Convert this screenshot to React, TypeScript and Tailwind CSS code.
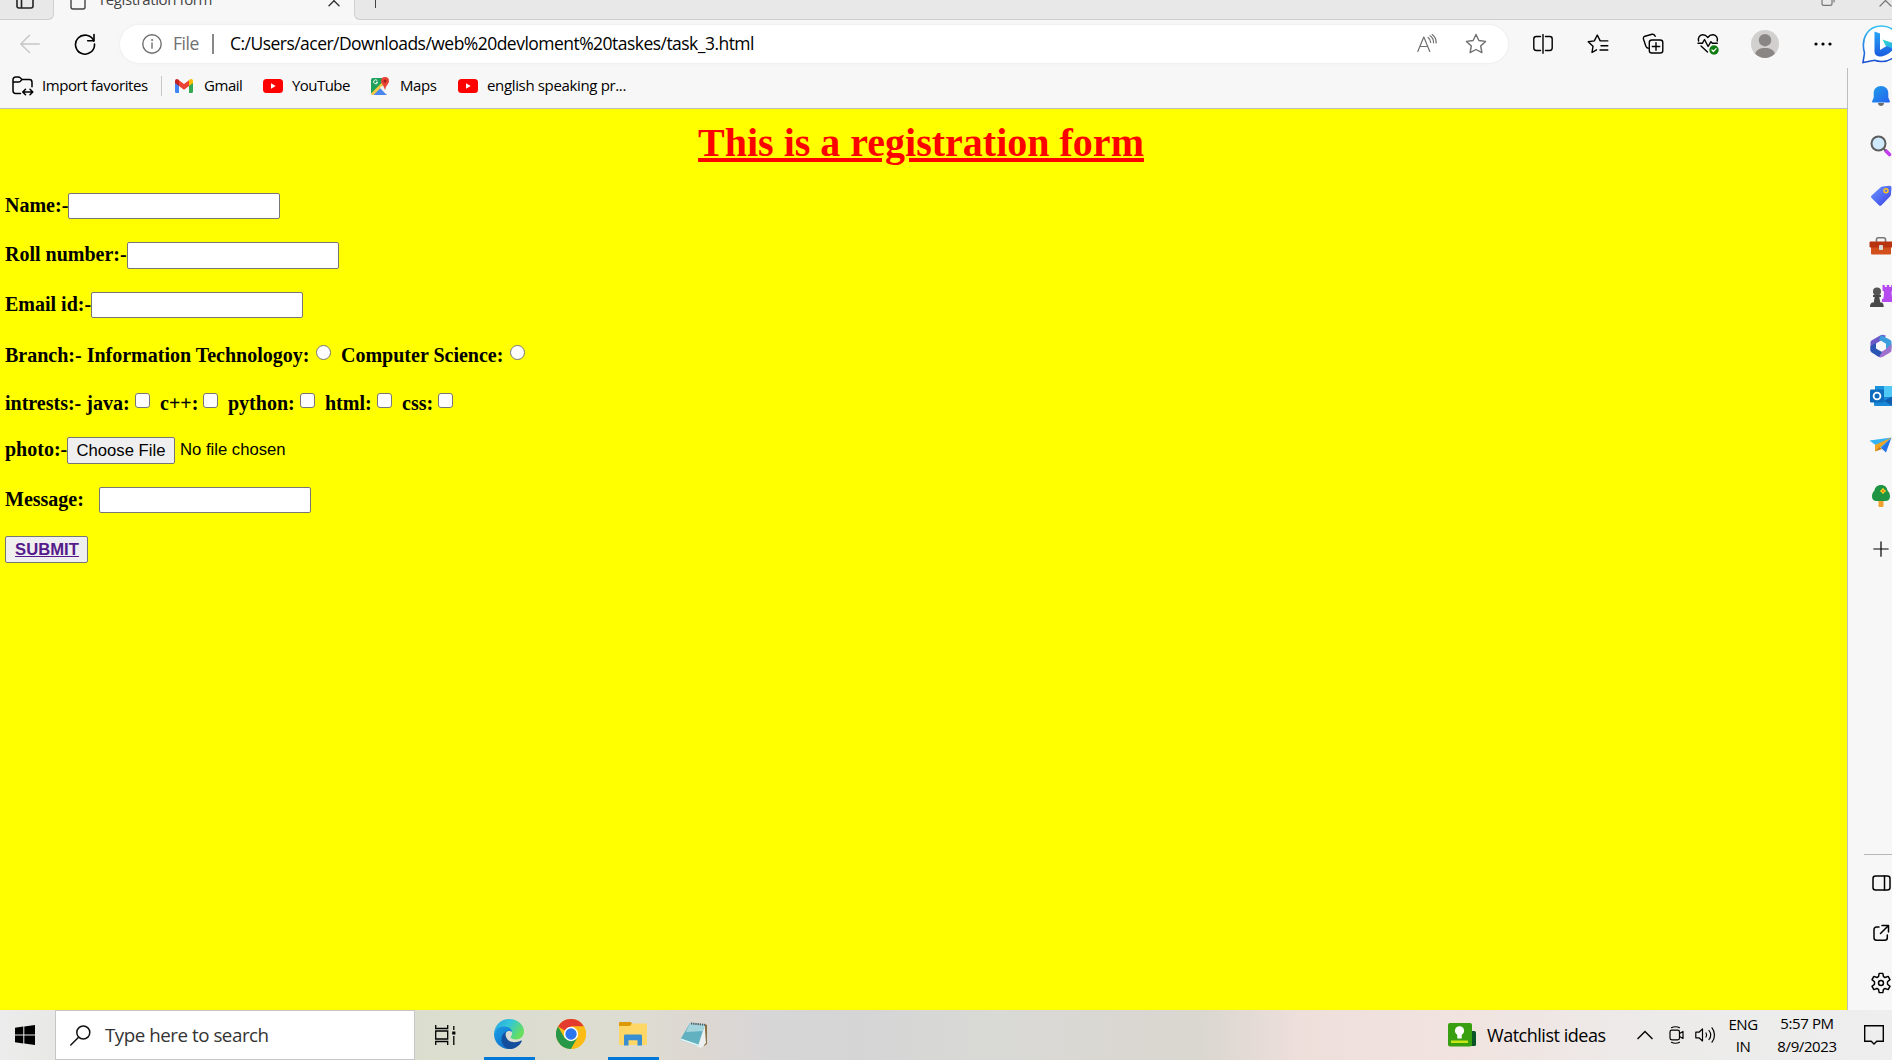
import React from "react";

type IconProps = { className?: string };

const line = {
  fill: "none",
  stroke: "currentColor",
  strokeWidth: 1.4,
  strokeLinecap: "round" as const,
  strokeLinejoin: "round" as const,
};

/* ---------- browser icons ---------- */

const BackIcon = () => (
  <svg width="20" height="20" viewBox="0 0 20 20" {...line} className="text-[#c6c6c6]">
    <path d="M19.300 10H.8M9.500 1.200.8 10l8.700 8.500" />
  </svg>
);

const RefreshIcon = () => (
  <svg width="22" height="22" viewBox="0 0 22 22" {...line} strokeWidth={1.6} className="text-black">
    <path d="M19.800 8A9.500 9.500 0 1 0 20.500 11" />
    <path d="M20 1.500v6.300h-6.300" />
  </svg>
);

const InfoIcon = () => (
  <svg width="20" height="20" viewBox="0 0 20 20" {...line} className="text-[#707070]">
    <circle cx="10" cy="10" r="9.200" />
    <path d="M10 9v5.300" />
    <circle cx="10" cy="6" r=".6" fill="currentColor" strokeWidth={0.8} />
  </svg>
);

const ReadAloudIcon = () => (
  <svg width="20" height="20" viewBox="0 0 20 20" {...line} strokeWidth={1.2} className="text-[#6f6f6f]">
    <path d="M.8 17.500 6.800 3l6 14.500M2.800 12.500h8" />
    <path d="M11 3.500c1.800 1.200 2.600 2.800 2.600 5M13 1.800c2.500 1.600 3.600 4 3.600 7M15.200.6c2.700 2 4 4.700 4 8.300" />
  </svg>
);

const StarIcon = () => (
  <svg width="22" height="22" viewBox="0 0 22 22" {...line} className="text-[#6f6f6f]">
    <path d="m11 1.500 2.900 6 6.600.9-4.800 4.600 1.200 6.600L11 16.500l-5.900 3.100 1.200-6.600L1.500 8.400l6.600-.9z" />
  </svg>
);

const SplitIcon = () => (
  <svg width="20" height="20" viewBox="0 0 20 20" {...line}>
    <path d="M7.500 2.500H3.200A2.400 2.400 0 0 0 .8 4.900v9.200a2.400 2.400 0 0 0 2.400 2.400h4.300M12.500 2.500h4.300a2.400 2.400 0 0 1 2.400 2.400v9.200a2.400 2.400 0 0 1-2.400 2.400h-4.300M10 .5v18.800" />
  </svg>
);

const FavoritesIcon = () => (
  <svg width="22" height="20" viewBox="0 0 22 20" {...line}>
    <path d="M9.500 15.800 5 18.500l1-6.200L1.200 7.800l6.100-.9L10.300 1l2.900 5.900h7.600M14 11.700h6.800M13 16h7.800" />
  </svg>
);

const CollectionsIcon = () => (
  <svg width="22" height="22" viewBox="0 0 22 22" {...line}>
    <path d="M6.300 15.200c-1.500-.2-2-1-2.400-2L1.500 6.200C1.100 4.600 1.600 3.700 3 3.200L10 1.300c1.500-.4 2.600.2 3.200 2" />
    <rect x="7.300" y="7" width="13.500" height="13" rx="2.600" />
    <path d="M14 9.800v7.400M10.300 13.500h7.400" />
  </svg>
);

const HealthIcon = () => (
  <svg width="22" height="22" viewBox="0 0 22 22" {...line}>
    <path d="M1.600 8C.8 5 2.300 2 5.500 1.800c2.400-.1 4 1 5.300 2.700C12.100 2.700 14 1.600 16.200 1.800c3.200.3 4.800 3.300 4 6.200M1 10.200h4.500l2-3.700 3.600 7 2.800-4.800 1.400 1.500h5M4 13l6.500 6" />
    <circle cx="17" cy="17" r="4.700" fill="#107c10" stroke="none" />
    <path d="m14.900 17 1.500 1.500 2.700-2.800" stroke="#fff" strokeWidth={1.2} />
  </svg>
);

const Avatar = () => (
  <svg width="28" height="28" viewBox="0 0 28 28">
    <circle cx="14" cy="14" r="14" fill="#d2d0ce" />
    <circle cx="14" cy="10.200" r="6.200" fill="#8a8683" />
    <path d="M4.200 23.800C5 19.900 9 18 14 18s9 1.900 9.800 5.800A14 14 0 0 1 14 28a14 14 0 0 1-9.800-4.200z" fill="#8a8683" />
  </svg>
);

const DotsIcon = () => (
  <svg width="18" height="4" viewBox="0 0 18 4">
    <circle cx="2" cy="2" r="1.600" />
    <circle cx="9" cy="2" r="1.600" />
    <circle cx="16" cy="2" r="1.600" />
  </svg>
);

const BingIcon = () => (
  <svg width="40" height="40" viewBox="0 0 40 40" className="shrink-0">
    <defs>
      <linearGradient id="bingRing" x1="0" y1="0" x2="0" y2="1">
        <stop offset="0" stopColor="#35c3f3" />
        <stop offset="1" stopColor="#1b4fd0" />
      </linearGradient>
      <linearGradient id="bingB" x1="0" y1="0" x2="0" y2="1">
        <stop offset="0" stopColor="#2aa5f5" />
        <stop offset="1" stopColor="#1b5be0" />
      </linearGradient>
      <linearGradient id="bingCurl" x1="0" y1="0" x2="1" y2="1">
        <stop offset="0" stopColor="#2fe0c8" />
        <stop offset="1" stopColor="#2a9df4" />
      </linearGradient>
    </defs>
    <path d="M1 37.500 2.500 28C-1.500 13 6 1 19.500 1 30 1 38 9 38 19s-8 17.500-18.500 17.500c-3 0-5-.4-7-1.200z" fill="#fff" stroke="url(#bingRing)" strokeWidth="1.600" />
    <path d="m12.500 6.500 5.500 2V25l10-6 4 3c0 4-9 9.500-13.500 9.500-3.500 0-6-1.800-6-5z" fill="url(#bingB)" />
    <path d="m20.500 14.500 10 3.500c3 1.200 3.500 4 1.500 6.500l-8.500-4z" fill="url(#bingCurl)" />
  </svg>
);

const ImportIcon = () => (
  <svg width="22" height="20" viewBox="0 0 22 20" {...line} strokeWidth={1.5}>
    <path d="M8.500 17.500H3.700A2.700 2.700 0 0 1 1 14.800V3.700C1 2.200 2.200 1 3.700 1h2.600c.8 0 1.400.3 1.900.8L10 3.500h7.300C19 3.500 20 4.700 20 6.200v4.600M1 6h5.500c.8 0 1.400-.3 1.900-.8L10 3.500" />
    <path d="M11 16h9.500M13.500 13.200 10.700 16l2.800 2.800M18 13.200l2.800 2.800-2.800 2.800" />
  </svg>
);

const GmailIcon = () => (
  <svg width="18" height="14" viewBox="0 0 18 14">
    <path d="M0 2v10.800c0 .7.500 1.200 1.200 1.200H4V6z" fill="#4285f4" />
    <path d="M18 2v10.800c0 .7-.5 1.200-1.200 1.200H14V6z" fill="#34a853" />
    <path d="M14 1.200V7l4-3V2c0-1.800-2-2.600-3.300-1.500z" fill="#fbbc04" />
    <path d="M0 2v2l4 3V1.200L3.300.5C2 -.6 0 .2 0 2z" fill="#c5221f" />
    <path d="M4 7V1.200L9 5l5-3.800V7l-5 3.800z" fill="#ea4335" />
  </svg>
);

const YouTubeIcon = () => (
  <svg width="20" height="14" viewBox="0 0 20 14" className="shrink-0">
    <rect width="20" height="14" rx="3.500" fill="#f00" />
    <path d="M8 4.200v5.600L12.700 7z" fill="#fff" />
  </svg>
);

const MapsIcon = () => (
  <svg width="18" height="18" viewBox="0 0 18 18">
    <path d="M0 3a2 2 0 0 1 2-2h10l3 13-1 4H2a2 2 0 0 1-2-2z" fill="#dfe3e6" />
    <path d="M0 3a2 2 0 0 1 2-2h9l1 5L0 17z" fill="#1ea05a" />
    <path d="M2 18 9 11l7 7z" fill="#4a87ee" />
    <path d="m0 16.500 12-12 2 2L2.500 18H1z" fill="#f5c842" />
    <path d="m9 10.500 6 6.500.5-3L11 9z" fill="#f2f4f5" />
    <path d="M6.300 3.700A2 2 0 1 0 6.600 5.300H5" fill="none" stroke="#fff" strokeWidth="1" />
    <path d="M14 0a4 4 0 0 1 4 4c0 3-3.200 4.200-3.700 8.500h-.6C13.200 8.200 10 7 10 4a4 4 0 0 1 4-4z" fill="#e94335" />
    <circle cx="14" cy="4" r="1.500" fill="#9c2219" />
  </svg>
);

/* ---------- sidebar icons ---------- */

const BellIcon = () => (
  <svg width="20" height="22" viewBox="0 0 20 22">
    <defs>
      <linearGradient id="bell" x1="0" y1="0" x2="1" y2="1">
        <stop offset="0" stopColor="#1f9de8" />
        <stop offset="1" stopColor="#2563f0" />
      </linearGradient>
    </defs>
    <path d="M7 18h6c0 1.700-1.300 3-3 3s-3-1.300-3-3z" fill="#6d6d6d" />
    <path d="M10 1c4.300 0 7.300 3 7.300 7.200v4.300l1.500 3.400c.4.900-.1 1.600-1 1.600H2.200c-.9 0-1.400-.7-1-1.600l1.500-3.400V8.200C2.700 4 5.700 1 10 1z" fill="url(#bell)" />
  </svg>
);

const LensIcon = () => (
  <svg width="22" height="22" viewBox="0 0 22 22">
    <path d="m16 16 3.500 3.500" stroke="#c43df0" strokeWidth="3.600" strokeLinecap="round" />
    <path d="m13 13 2.500 2.500" stroke="#666" strokeWidth="2" />
    <circle cx="8.500" cy="8.500" r="7" fill="#cfeafc" stroke="#5d5d5d" strokeWidth="2" />
  </svg>
);

const TagIcon = () => (
  <svg width="22" height="22" viewBox="0 0 22 22">
    <defs>
      <linearGradient id="tag" x1="0" y1="0" x2="1" y2="1">
        <stop offset="0" stopColor="#6a9bff" />
        <stop offset="1" stopColor="#3b3fe6" />
      </linearGradient>
    </defs>
    <path d="M12.500 1.500 19.500.8c1.300 0 2 .7 2 2l-.6 7c0 .6-.3 1-.7 1.400l-8.700 9c-.8.800-1.800.8-2.600 0L1.600 13c-.8-.8-.8-1.800 0-2.600L11 2.100c.5-.4.900-.6 1.500-.6z" fill="url(#tag)" />
    <circle cx="16" cy="5.800" r="2" fill="#6a70e8" stroke="#f8c51c" strokeWidth="1.500" />
  </svg>
);

const ToolboxIcon = () => (
  <svg width="24" height="20" viewBox="0 0 24 20">
    <path d="M7.500 6V3.500c0-1 .7-1.700 1.700-1.700h5.600c1 0 1.700.7 1.700 1.700V6" fill="none" stroke="#777" strokeWidth="1.600" />
    <rect x="2" y="10" width="20" height="8.500" rx="1.200" fill="#d3501c" />
    <rect x=".5" y="5.500" width="23" height="6" rx="1" fill="#b83410" />
    <rect x="10" y="9" width="4" height="5" rx=".8" fill="#d8d8d8" />
  </svg>
);

const ChessIcon = () => (
  <svg width="24" height="24" viewBox="0 0 24 24">
    <path d="M13.500 1h2.300v2h1.900V1h2.600v2h1.900V1H24v5.500l-1.500 1.300.6 7H24V18H13v-3l1.500-.5.600-6.700-1.600-1.300z" fill="#b44af0" />
    <circle cx="8" cy="7.500" r="4" fill="#555" />
    <path d="M4 11h8v2h-1.700l1 5.500H13c1 .8 1.700 2 1.700 4.500H1c0-2.500.8-3.700 2-4.500h1.700l1-5.500H4z" fill="#484848" />
  </svg>
);

const M365Icon = () => (
  <svg width="22" height="24" viewBox="0 0 22 24">
    <path d="M11 1 1.500 6.500A3 3 0 0 0 .5 9v8l5.500-2V9.500L13.500 5 16 1.800 13 .8z" fill="#6d58c8" />
    <path d="m11 1 8.500 4.500c1.300.7 2 1.700 2 3V14L16 15V9.700L9 5.500z" fill="#3d9ede" />
    <path d="M21.500 10v6c0 1.300-.7 2.200-1.800 2.800L12.500 23c-1.300.6-2.400.6-3.500 0l-3-1.800L16 15z" fill="#a070cf" />
    <path d="M.5 12v4c0 1.200.5 2.200 1.600 2.800L9 23l3-5-6-3.500V9z" fill="#2b56b4" />
  </svg>
);

const OutlookIcon = () => (
  <svg width="24" height="22" viewBox="0 0 24 22">
    <rect x="6" y="1" width="18" height="18" rx="1" fill="#50c8f5" />
    <path d="M6 1h9v9H6z" fill="#1b92dc" />
    <path d="M5 12h19v9H6a1 1 0 0 1-1-1z" fill="#1a88d8" />
    <path d="M24 11 15 16l9 5z" fill="#0f5fae" />
    <rect x="1" y="4.500" width="14" height="13" rx="1.200" fill="#0f6cbd" />
    <circle cx="8" cy="11" r="3.400" fill="none" stroke="#fff" strokeWidth="1.800" />
  </svg>
);

const PlaneIcon = () => (
  <svg width="24" height="20" viewBox="0 0 24 20">
    <path d="m.5 4.500 22-3-10 10.500-6-3z" fill="#35b3f5" />
    <path d="M22.500 1.500 17 16.500l-5-4.500z" fill="#2573e8" />
    <path d="M22.500 1.500 6 9v6.500l4-3z" fill="#f0a524" />
    <path d="M6 15.500 10.500 11l2.500 2z" fill="#c97c14" />
  </svg>
);

const TreeIcon = () => (
  <svg width="20" height="24" viewBox="0 0 20 24">
    <rect x="7.500" y="16" width="5" height="7" rx="1" fill="#f0a22c" />
    <path d="M10 1c4 0 6 2.400 6.500 5.500C18.600 8.500 19 10.500 19 12.500c0 3-2 4.500-4.500 4.500h-9C3 17 1 15.500 1 12.500c0-2 .4-4 2.500-6C4 3.400 6 1 10 1z" fill="#1f9544" />
    <path d="M12 5.500v3M10.500 7h3" stroke="#f9ce22" strokeWidth="2.400" strokeLinecap="round" />
    <circle cx="12" cy="7" r="1.100" fill="#e57c12" />
  </svg>
);

const PlusIcon = () => (
  <svg width="16" height="16" viewBox="0 0 16 16" {...line} strokeWidth={1.2}>
    <path d="M8 .8v14.400M.8 8h14.400" />
  </svg>
);

const PanelIcon = () => (
  <svg width="19" height="16" viewBox="0 0 19 16" {...line} strokeWidth={1.5}>
    <rect x="1" y="1" width="17" height="14" rx="2.500" />
    <path d="M12.500 1v14" />
  </svg>
);

const OpenIcon = () => (
  <svg width="18" height="18" viewBox="0 0 18 18" {...line} strokeWidth={1.5}>
    <path d="M7 3H4.500A2.500 2.500 0 0 0 2 5.500v8.300c0 1.400 1.100 2.500 2.500 2.500h8.300c1.400 0 2.500-1.100 2.500-2.500V11M10 1.500h6.500V8M16 2 8.500 9.500" />
  </svg>
);

const GearIcon = () => (
  <svg width="22" height="22" viewBox="0 0 24 24" {...line} strokeWidth={1.6}>
    <path d="M10 1.500h4l.7 3.500 1.700 1 3.400-1.200 2 3.500-2.700 2.300v2.800l2.700 2.300-2 3.500-3.400-1.200-1.700 1-.7 3.500h-4L9.300 19l-1.700-1-3.400 1.200-2-3.500 2.700-2.300v-2.800L2.200 8.300l2-3.500L7.600 6l1.700-1z" />
    <circle cx="12" cy="12" r="2.700" />
  </svg>
);

/* ---------- taskbar icons ---------- */

const WindowsIcon = () => (
  <svg width="20" height="20" viewBox="0 0 20 20">
    <path d="M0 2.800 8.300 1.600v7.800H0zM9.300 1.500 20 0v9.400H9.300zM0 10.400h8.300v8L0 17.200zM9.300 10.400H20V20L9.300 18.500z" />
  </svg>
);

const SearchIcon = () => (
  <svg width="21" height="21" viewBox="0 0 21 21" {...line} strokeWidth={1.5} className="text-[#111]">
    <circle cx="13.300" cy="7.500" r="6.500" />
    <path d="M8.600 12.200.8 20" />
  </svg>
);

const TaskViewIcon = () => (
  <svg width="21" height="20" viewBox="0 0 21 20" fill="none" stroke="#000" strokeWidth="1.300">
    <path d="M.7 0v3.500h12V0M.7 20v-3.500h12V20M.7 6h12v8H.7zM18.800 1v4M18.800 11v9" />
    <path d="M17.200 6.500h3.200v3h-3.200z" fill="#000" stroke="none" />
  </svg>
);

const EdgeIcon = () => (
  <svg width="30" height="30" viewBox="0 0 30 30">
    <defs>
      <linearGradient id="edgeTop" x1="0" y1="0" x2="1" y2=".5">
        <stop offset="0" stopColor="#27a3e6" />
        <stop offset=".5" stopColor="#33c6d8" />
        <stop offset="1" stopColor="#67df5d" />
      </linearGradient>
      <linearGradient id="edgeBody" x1="0" y1="0" x2="1" y2="1">
        <stop offset="0" stopColor="#1ca0e8" />
        <stop offset="1" stopColor="#0b63c0" />
      </linearGradient>
    </defs>
    <path d="M0 14C1 6 7 0 15 0c9 0 15 6 15 12.500 0 5-4 8-8 8-3.500 0-5.400-1.200-5.400-2.200 0-.8 1.400-1.500 1.400-4C18 10 14 8 10 8 5 8 1.500 11 0 14z" fill="url(#edgeTop)" />
    <path d="M0 15C.5 10.500 5 7.500 10 7.500c4.500 0 8 2.500 8 5.500-4-3-8 1-7 6 1 5.500 5 9 9 9.500-1.500 1-3 1.500-5 1.500C6 30 0 23 0 15z" fill="url(#edgeBody)" />
    <path d="M12 12.500c-1 2.500-.5 6 2 8.500 3.500 3 9.500 2.500 13 .5.600-.3 1.200.2.800.8C25.500 27 21 30 16.500 30c-5 0-9-4.500-9-9.500 0-3.500 1.800-6.500 4.500-8z" fill="#134f9c" />
  </svg>
);

const ChromeIcon = () => (
  <svg width="30" height="30" viewBox="0 0 30 30">
    <circle cx="15" cy="15" r="15" fill="#fbbc16" />
    <path d="M15 15 2 7.500A15 15 0 0 1 28 7.500H15z" fill="#e33b2e" />
    <path d="M15 15 8.500 18.800 2 7.500A15 15 0 0 0 15 30l6.500-11.200z" fill="#279847" />
    <path d="M28 7.500H15V15l6.500 3.800L15 30A15 15 0 0 0 28 7.500z" fill="#fbbc16" />
    <circle cx="15" cy="15" r="7.200" fill="#fff" />
    <circle cx="15" cy="15" r="5.700" fill="#2a76ee" />
  </svg>
);

const FolderIcon = () => (
  <svg width="28" height="24" viewBox="0 0 28 24">
    <path d="M1 0h11l1.500 3L11 6H0V1a1 1 0 0 1 1-1z" fill="#dd9a05" />
    <path d="M0 4h11l2-2.500h14a1 1 0 0 1 1 1V22a1 1 0 0 1-1 1H1a1 1 0 0 1-1-1z" fill="#ffd767" />
    <path d="M5 23.500V13.800c0-.8.600-1.400 1.400-1.400h15.200c.8 0 1.400.6 1.400 1.400v9.700h-4.500v-5.300H9.500v5.300z" fill="#3a8fd2" />
  </svg>
);

const NotepadIcon = () => (
  <svg width="28" height="26" viewBox="0 0 28 26">
    <path d="m25 2 2 1v19l-3 2z" fill="#8a7040" />
    <path d="M24.500 2 26 21l-5 5-5-2z" fill="#edf0f0" />
    <path d="M10 1 25 2.500 18 24 0 18z" fill="#62b1c1" />
    <path d="M10 1 25 2.500 23 9 6 10z" fill="#a5d6de" />
    <path d="M11 1.500 25 2.800" stroke="#4b5558" strokeWidth="2" strokeDasharray="1.200 1" />
    <path d="m0 18 18 6 .5-1.500L1 16.500z" fill="#e4f4f5" />
  </svg>
);

const WatchlistIcon = () => (
  <svg width="28" height="24" viewBox="0 0 28 24">
    <rect x="10" y="8" width="18" height="15" rx="1.500" fill="#0a5527" />
    <rect width="24" height="23.500" rx="2" fill="#38a010" />
    <circle cx="11.500" cy="7.800" r="4.600" fill="#fff" />
    <path d="M9.300 11h4.400v4.500H9.300z" fill="#fff" />
    <path d="M3 17.500h17v2.500H3z" fill="#c6e81b" />
  </svg>
);

const ChevronIcon = () => (
  <svg width="16" height="10" viewBox="0 0 16 10" {...line} strokeLinecap="butt" strokeLinejoin="miter">
    <path d="m.5 9 7.500-7.500L15.500 9" />
  </svg>
);

const MeetIcon = () => (
  <svg width="15" height="18" viewBox="0 0 15 18" {...line} strokeWidth={1.2}>
    <rect x="1" y="4.200" width="9.500" height="9.600" rx="1.800" />
    <path d="m10.500 7.500 3.500-2v7l-3.500-2M2.500 1.700C4.500.4 8.500.4 10.500 1.700M2.500 16.300c2 1.300 6 1.300 8 0" />
  </svg>
);

const SpeakerIcon = () => (
  <svg width="21" height="18" viewBox="0 0 21 18" {...line} strokeWidth={1.2}>
    <path d="M.8 6.200H4L7.500 3v12L4 11.800H.8zM11 7c.8 1.200.8 2.800 0 4M14 4.500c2 2.600 2 6.400 0 9M17 1.800c3.300 4.200 3.300 10.200 0 14.400" />
  </svg>
);

const NoticeIcon = () => (
  <svg width="20" height="20" viewBox="0 0 20 20" fill="none" stroke="#000" strokeWidth="1.400">
    <path d="M.7.7h18.600v15.600h-6.500L10 19l-2.800-2.700H.7z" />
  </svg>
);

/* ---------- building blocks ---------- */

function Cell({ children, className = "" }: { children: React.ReactNode; className?: string }) {
  return <div className={`flex shrink-0 items-center justify-center ${className}`}>{children}</div>;
}

function TabStrip() {
  return (
    <div className="flex h-5 overflow-hidden bg-[#f7f7f7] text-[#444]">
      <div className="flex h-5 w-[54px] shrink-0 rounded-br-md border-r border-b border-[#cfcfcf] bg-[#e8e8e8] pl-4">
        <svg width="18" height="9" viewBox="0 0 18 9" {...line} strokeWidth={1.6} className="text-[#222]">
          <path d="M1 0v6a2 2 0 0 0 2 2h12a2 2 0 0 0 2-2V0M5.500 0v8" />
        </svg>
      </div>
      <div className="flex w-[300px] shrink-0 pl-4">
        <svg width="16" height="10" viewBox="0 0 16 10" {...line} className="shrink-0 text-[#444]">
          <path d="M1 0v7a2 2 0 0 0 2 2h10a2 2 0 0 0 2-2V0" />
        </svg>
        <span className="-mt-[11px] ml-[14px] w-[228px] shrink-0 text-[15px] leading-5 tracking-[-0.4px]">
          registration form
        </span>
        <svg width="12" height="7" viewBox="0 0 12 7" {...line} className="shrink-0 text-[#333]">
          <path d="m1 5.800 5-5 5 5M6 .8V0" />
        </svg>
      </div>
      <div className="flex grow rounded-bl-md border-b border-l border-[#cfcfcf] bg-[#e8e8e8] pl-5">
        <div className="h-2 w-px bg-[#444]" />
        <div className="grow" />
        <svg width="14" height="7" viewBox="0 0 14 7" {...line} strokeWidth={1.2} className="mr-11 text-[#777]">
          <path d="M1 0v3.500c0 1 .8 1.900 1.900 1.900h6.200c1 0 1.900-.8 1.900-1.900V0M13 0v2" />
        </svg>
        <svg width="13" height="7" viewBox="0 0 13 7" {...line} strokeWidth={1.2} className="text-[#777]">
          <path d="M1 6 6.500.5 12 6" />
        </svg>
      </div>
    </div>
  );
}

function Toolbar() {
  return (
    <div className="flex h-12 items-start">
      <Cell className="mt-[5px] h-[37px] w-[60px]"><BackIcon /></Cell>
      <Cell className="mt-[5px] h-[37px] w-[50px]"><RefreshIcon /></Cell>
      <div className="mt-[5px] ml-[10px] flex h-[38px] w-[1388px] shrink-0 items-center rounded-full bg-white pl-[22px] shadow-[0_0_3px_rgba(0,0,0,0.08)]">
        <InfoIcon />
        <span className="mb-px ml-[11px] w-[39px] text-[17.5px] tracking-[-0.45px] text-[#707070]">File</span>
        <div className="h-5 w-[2px] bg-[#888]" />
        <span className="mb-px ml-4 grow text-[17.5px] tracking-[-0.53px] text-black">
          C:/Users/acer/Downloads/web%20devloment%20taskes/task_3.html
        </span>
        <ReadAloudIcon />
        <Cell className="-mr-[7px] w-[78px]"><StarIcon /></Cell>
      </div>
      <Cell className="mt-[5px] ml-[7px] h-[38px] w-[55px]"><SplitIcon /></Cell>
      <Cell className="mt-[5px] h-[38px] w-[55px]"><FavoritesIcon /></Cell>
      <Cell className="mt-[5px] h-[38px] w-[55px]"><CollectionsIcon /></Cell>
      <Cell className="mt-[5px] h-[38px] w-[55px]"><HealthIcon /></Cell>
      <Cell className="mt-[5px] h-[38px] w-[60px]"><Avatar /></Cell>
      <Cell className="mt-[5px] h-[38px] w-[55px]"><DotsIcon /></Cell>
      <div className="mt-[5px] ml-[12px] w-[30px] overflow-hidden"><BingIcon /></div>
    </div>
  );
}

function FavoritesBar() {
  return (
    <div className="flex h-[41px] shrink-0 items-center border-b border-[#bdbdbd] pb-[5px] text-[15px] text-black">
      <div className="flex w-[161px] items-center pl-3">
        <ImportIcon />
        <span className="mb-px ml-2 tracking-[-0.42px] whitespace-nowrap">Import favorites</span>
      </div>
      <div className="mr-[13px] h-5 w-px bg-[#c6c6c6]" />
      <GmailIcon />
      <span className="mb-px ml-[11px] w-[59px] tracking-[-0.45px]">Gmail</span>
      <YouTubeIcon />
      <span className="mb-px ml-[9px] w-[79px] tracking-[-0.55px]">YouTube</span>
      <MapsIcon />
      <span className="mb-px ml-[11px] w-[58px] tracking-[-0.4px]">Maps</span>
      <YouTubeIcon />
      <span className="mb-px ml-[9px] tracking-[-0.35px]">english speaking pr...</span>
    </div>
  );
}

function TextBox({ className = "" }: IconProps) {
  return <input type="text" className={`-mt-px w-[212px] rounded-[2px] border border-[#767676] bg-white ${className}`} />;
}

function Radio() {
  return <span className="mt-px h-[15px] w-[15px] rounded-full border border-[#767676] bg-white" />;
}

function Check() {
  return <span className="mt-px h-[15px] w-[15px] rounded-[3px] border border-[#767676] bg-white" />;
}

function Row({ className, children }: { className: string; children: React.ReactNode }) {
  return <div className={`flex items-start whitespace-nowrap ${className}`}>{children}</div>;
}

function FormPage() {
  return (
    <main className="grow overflow-hidden bg-[#ff0] pl-[5px] font-['Liberation_Serif',serif] text-[20px] leading-[22px] font-bold text-black">
      <h1 className="mt-[11px] mr-[10px] h-[74px] text-center text-[40px] leading-[46px] text-[#f00] underline">
        This is a registration form
      </h1>
      <Row className="h-[49px]">
        <span className="w-[63px]">Name:-</span>
        <TextBox className="h-[26px]" />
      </Row>
      <Row className="h-[50px]">
        <span className="w-[122px]">Roll number:-</span>
        <TextBox className="h-[27px]" />
      </Row>
      <Row className="h-[51px]">
        <span className="w-[86px]">Email id:-</span>
        <TextBox className="h-[26px]" />
      </Row>
      <Row className="h-12">
        <span className="w-[311px]">Branch:- Information Technologoy:</span>
        <Radio />
        <span className="ml-[10px] w-[168.500px]">Computer Science:</span>
        <Radio />
      </Row>
      <Row className="h-[46px]">
        <span className="w-[130px]">intrests:- java:</span>
        <Check />
        <span className="ml-[10px] w-[43px]">c++:</span>
        <Check />
        <span className="ml-[10px] w-[72px]">python:</span>
        <Check />
        <span className="ml-[10px] w-[52px]">html:</span>
        <Check />
        <span className="ml-[10px] w-[36px]">css:</span>
        <Check />
      </Row>
      <Row className="h-[50px] font-['Liberation_Sans',sans-serif]">
        <span className="w-[62px] font-['Liberation_Serif',serif]">photo:-</span>
        <button className="-mt-px h-[27px] w-[108px] rounded-[2px] border border-[#767676] bg-[#efefef] text-[16.67px] font-normal">
          Choose File
        </button>
        <span className="mt-px ml-[5px] text-[16.67px] font-normal">No file chosen</span>
      </Row>
      <Row className="h-[49px]">
        <span className="w-[94px]">Message:</span>
        <TextBox className="h-[26px]" />
      </Row>
      <Row className="h-[27px]">
        <button className="-mt-px h-[27px] w-[83px] rounded-[2px] border border-[#767676] bg-[#efefef] pl-px font-['Liberation_Sans',sans-serif] text-[16.67px] font-bold text-[#551a8b] underline">
          SUBMIT
        </button>
      </Row>
    </main>
  );
}

function Sidebar() {
  return (
    <aside className="w-[45px] shrink-0 overflow-hidden border-l border-[#bdbdbd] bg-[#f7f7f7] text-black">
      <div className="flex h-full w-[66px] flex-col">
        <Cell className="mt-[3px] h-[50px]"><BellIcon /></Cell>
        <Cell className="h-[50px]"><LensIcon /></Cell>
        <Cell className="h-[50px]"><TagIcon /></Cell>
        <Cell className="h-[50px]"><ToolboxIcon /></Cell>
        <Cell className="h-[50px]"><ChessIcon /></Cell>
        <Cell className="h-[50px]"><M365Icon /></Cell>
        <Cell className="h-[50px]"><OutlookIcon /></Cell>
        <Cell className="h-[50px]"><PlaneIcon /></Cell>
        <Cell className="h-[50px]"><TreeIcon /></Cell>
        <Cell className="mt-[3px] h-[50px]"><PlusIcon /></Cell>
        <div className="grow" />
        <div className="ml-4 h-px shrink-0 bg-[#b8b8b8]" />
        <Cell className="mt-[3px] h-[50px]"><PanelIcon /></Cell>
        <Cell className="h-[50px]"><OpenIcon /></Cell>
        <Cell className="mb-[2px] h-[50px]"><GearIcon /></Cell>
      </div>
    </aside>
  );
}

function Taskbar() {
  return (
    <footer className="flex h-[50px] shrink-0 items-center bg-[linear-gradient(90deg,#ececec_0px,#e8e8e6_55px,#dbdecf_415px,#dddcd2_640px,#ddd7d2_700px,#d7d6d7_770px,#d5d5d6_860px,#d9d9d5_1000px,#dad6d0_1200px,#eedfdb_1300px,#f1e3df_1450px,#ecebea_1660px,#eeeeee_1892px)] text-black">
      <Cell className="w-[50px]"><WindowsIcon /></Cell>
      <div className="ml-[5px] flex h-[50px] w-[360px] items-center border border-[#c6c6c8] bg-white pl-[14px]">
        <SearchIcon />
        <span className="ml-[14px] text-[18.75px] tracking-[-0.47px] text-[#333]">Type here to search</span>
      </div>
      <Cell className="ml-[5px] w-[51px]"><TaskViewIcon /></Cell>
      <Cell className="ml-[13px] h-[50px] w-[51px] border-b-[3px] border-[#0078d7] pr-px"><EdgeIcon /></Cell>
      <Cell className="ml-[11px] h-[50px] w-[51px] border-b-[3px] border-transparent pr-[2px]"><ChromeIcon /></Cell>
      <Cell className="ml-[11px] h-[50px] w-[51px] border-b-[3px] border-[#0078d7] pr-px"><FolderIcon /></Cell>
      <Cell className="ml-[9px] w-[51px]"><NotepadIcon /></Cell>
      <div className="grow" />
      <WatchlistIcon />
      <span className="ml-[11px] w-[150px] text-[18px] tracking-[-0.48px] whitespace-nowrap">Watchlist ideas</span>
      <ChevronIcon />
      <Cell className="ml-4 w-[15px]"><MeetIcon /></Cell>
      <Cell className="ml-[11px] w-[21px]"><SpeakerIcon /></Cell>
      <div className="ml-[6px] w-[42px] text-center text-[15px] leading-[22px] tracking-[-0.45px]">
        <div>ENG</div>
        <div>IN</div>
      </div>
      <div className="ml-[8px] w-[70px] text-center text-[15px] leading-[23px] tracking-[-0.4px] whitespace-nowrap">
        <div>5:57 PM</div>
        <div>8/9/2023</div>
      </div>
      <Cell className="mr-2 ml-[22px] w-5"><NoticeIcon /></Cell>
    </footer>
  );
}

export default function App() {
  return (
    <div className="flex h-[1060px] w-[1892px] flex-col overflow-hidden bg-[#f7f7f7] font-['Open_Sans','Noto_Sans',sans-serif]">
      <TabStrip />
      <Toolbar />
      <div className="flex h-[942px] shrink-0">
        <div className="flex grow flex-col">
          <FavoritesBar />
          <FormPage />
        </div>
        <Sidebar />
      </div>
      <Taskbar />
    </div>
  );
}
